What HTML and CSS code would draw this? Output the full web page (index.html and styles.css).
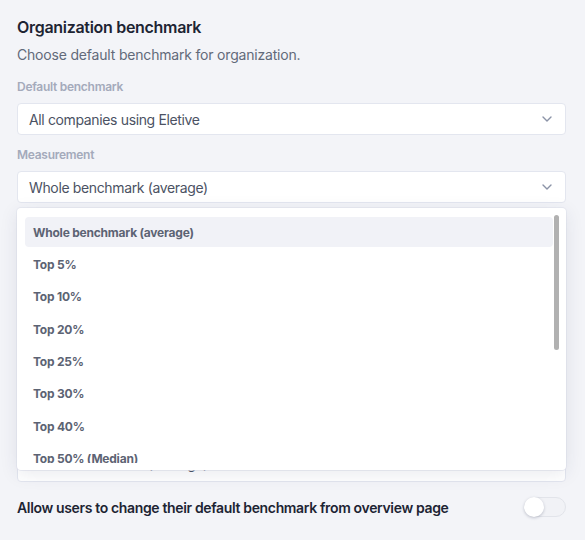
FILE: index.html
```html
<!DOCTYPE html>
<html>
<head>
<meta charset="utf-8">
<link rel="stylesheet" href="styles.css">
</head>
<body>
<div class="page">
  <h1 class="title">Organization benchmark</h1>
  <p class="subtitle">Choose default benchmark for organization.</p>

  <div class="field">
    <div class="label">Default benchmark</div>
    <div class="select">
      <span>All companies using Eletive</span>
      <svg class="chev" width="10" height="6" viewBox="0 0 10 6"><path d="M1 1l4 4 4-4" fill="none" stroke="#8b93a7" stroke-width="1.4" stroke-linecap="round" stroke-linejoin="round"/></svg>
    </div>
  </div>

  <div class="field">
    <div class="label">Measurement</div>
    <div class="select-wrap">
      <div class="select">
        <span>Whole benchmark (average)</span>
        <svg class="chev" width="10" height="6" viewBox="0 0 10 6"><path d="M1 1l4 4 4-4" fill="none" stroke="#8b93a7" stroke-width="1.4" stroke-linecap="round" stroke-linejoin="round"/></svg>
      </div>
      <div class="menu">
        <div class="viewport">
          <ul class="options">
            <li class="option active">Whole benchmark (average)</li>
            <li class="option">Top 5%</li>
            <li class="option">Top 10%</li>
            <li class="option">Top 20%</li>
            <li class="option">Top 25%</li>
            <li class="option">Top 30%</li>
            <li class="option">Top 40%</li>
            <li class="option">Top 50% (Median)</li>
            <li class="option">Top 60%</li>
          </ul>
        </div>
        <div class="thumb"></div>
      </div>
    </div>
  </div>

  <div class="field field-last">
    <div class="select"><span class="under">Whole benchmark (average)</span></div>
  </div>

  <div class="toggle-row">
    <span class="toggle-text">Allow users to change their default benchmark from overview page</span>
    <span class="toggle"><span class="knob"></span></span>
  </div>
</div>
</body>
</html>
```

FILE: styles.css
```css
* { box-sizing: border-box; }
html, body {
  margin: 0;
  padding: 0;
  background: #f3f4f8;
}
body {
  font-family: "Inter", "Open Sans", sans-serif;
  width: 585px;
  height: 540px;
  overflow: hidden;
}
.page {
  padding: 15px 19px 0 17px;
}
.title {
  margin: 0;
  font-size: 16px;
  line-height: 24px;
  font-weight: 600;
  letter-spacing: -0.3px;
  color: #1d2433;
}
.subtitle {
  margin: 6px 0 0;
  font-size: 14px;
  line-height: 20px;
  letter-spacing: -0.19px;
  color: #626a7a;
}
.subtitle + .field { margin-top: 14px; }
.field {
  display: flex;
  flex-direction: column;
  gap: 8px;
  margin-bottom: 12px;
}
.field-last { margin-top: 247px; margin-bottom: 0; }
.label {
  font-size: 12px;
  line-height: 16px;
  font-weight: 600;
  letter-spacing: -0.28px;
  color: #a4aabb;
}
.select {
  height: 32px;
  background: #fff;
  border: 1px solid #e3e6ef;
  border-radius: 4px;
  padding: 0 12px 0 11px;
  display: flex;
  align-items: center;
  justify-content: space-between;
  font-size: 14px;
  letter-spacing: -0.36px;
  color: #4b5263;
}
.under { margin-top: -6px; }
.chev { display: block; margin-right: 1px; }
.select-wrap { position: relative; }
.menu {
  position: absolute;
  left: 0;
  right: 0;
  top: 37px;
  height: 262px;
  padding: 7px 0;
  background: #fff;
  border-radius: 4px;
  box-shadow: 0 4px 18px rgba(40, 50, 90, 0.10), 0 0 0 1px rgba(226, 229, 238, 0.6);
  z-index: 5;
}
.viewport {
  height: 248px;
  overflow: hidden;
}
.options {
  list-style: none;
  margin: 0;
  padding: 2px 13px 0 8px;
  display: flex;
  flex-direction: column;
  gap: 2.4px;
}
.option {
  height: 30px;
  flex: none;
  display: flex;
  align-items: center;
  padding-left: 8px;
  font-size: 12px;
  font-weight: 700;
  letter-spacing: -0.22px;
  color: #5c6373;
  border-radius: 4px;
}
.option.active { background: #f1f2f7; }
.thumb {
  position: absolute;
  right: 7px;
  top: 7px;
  width: 5px;
  height: 135px;
  border-radius: 3px;
  background: #b1b1b1;
}
.toggle-row {
  margin-top: 15px;
  display: flex;
  align-items: center;
  justify-content: space-between;
  height: 20px;
}
.toggle-text {
  font-size: 14px;
  font-weight: 600;
  letter-spacing: -0.35px;
  color: #1d2433;
}
.toggle {
  width: 42px;
  height: 20px;
  border-radius: 10px;
  background: #f1f2f6;
  border: 1px solid #e2e4ea;
  display: flex;
  align-items: center;
}
.knob {
  width: 20px;
  height: 20px;
  margin-left: -1px;
  border-radius: 50%;
  background: #fff;
  box-shadow: 0 1px 3px rgba(30, 40, 70, 0.25);
}
```
